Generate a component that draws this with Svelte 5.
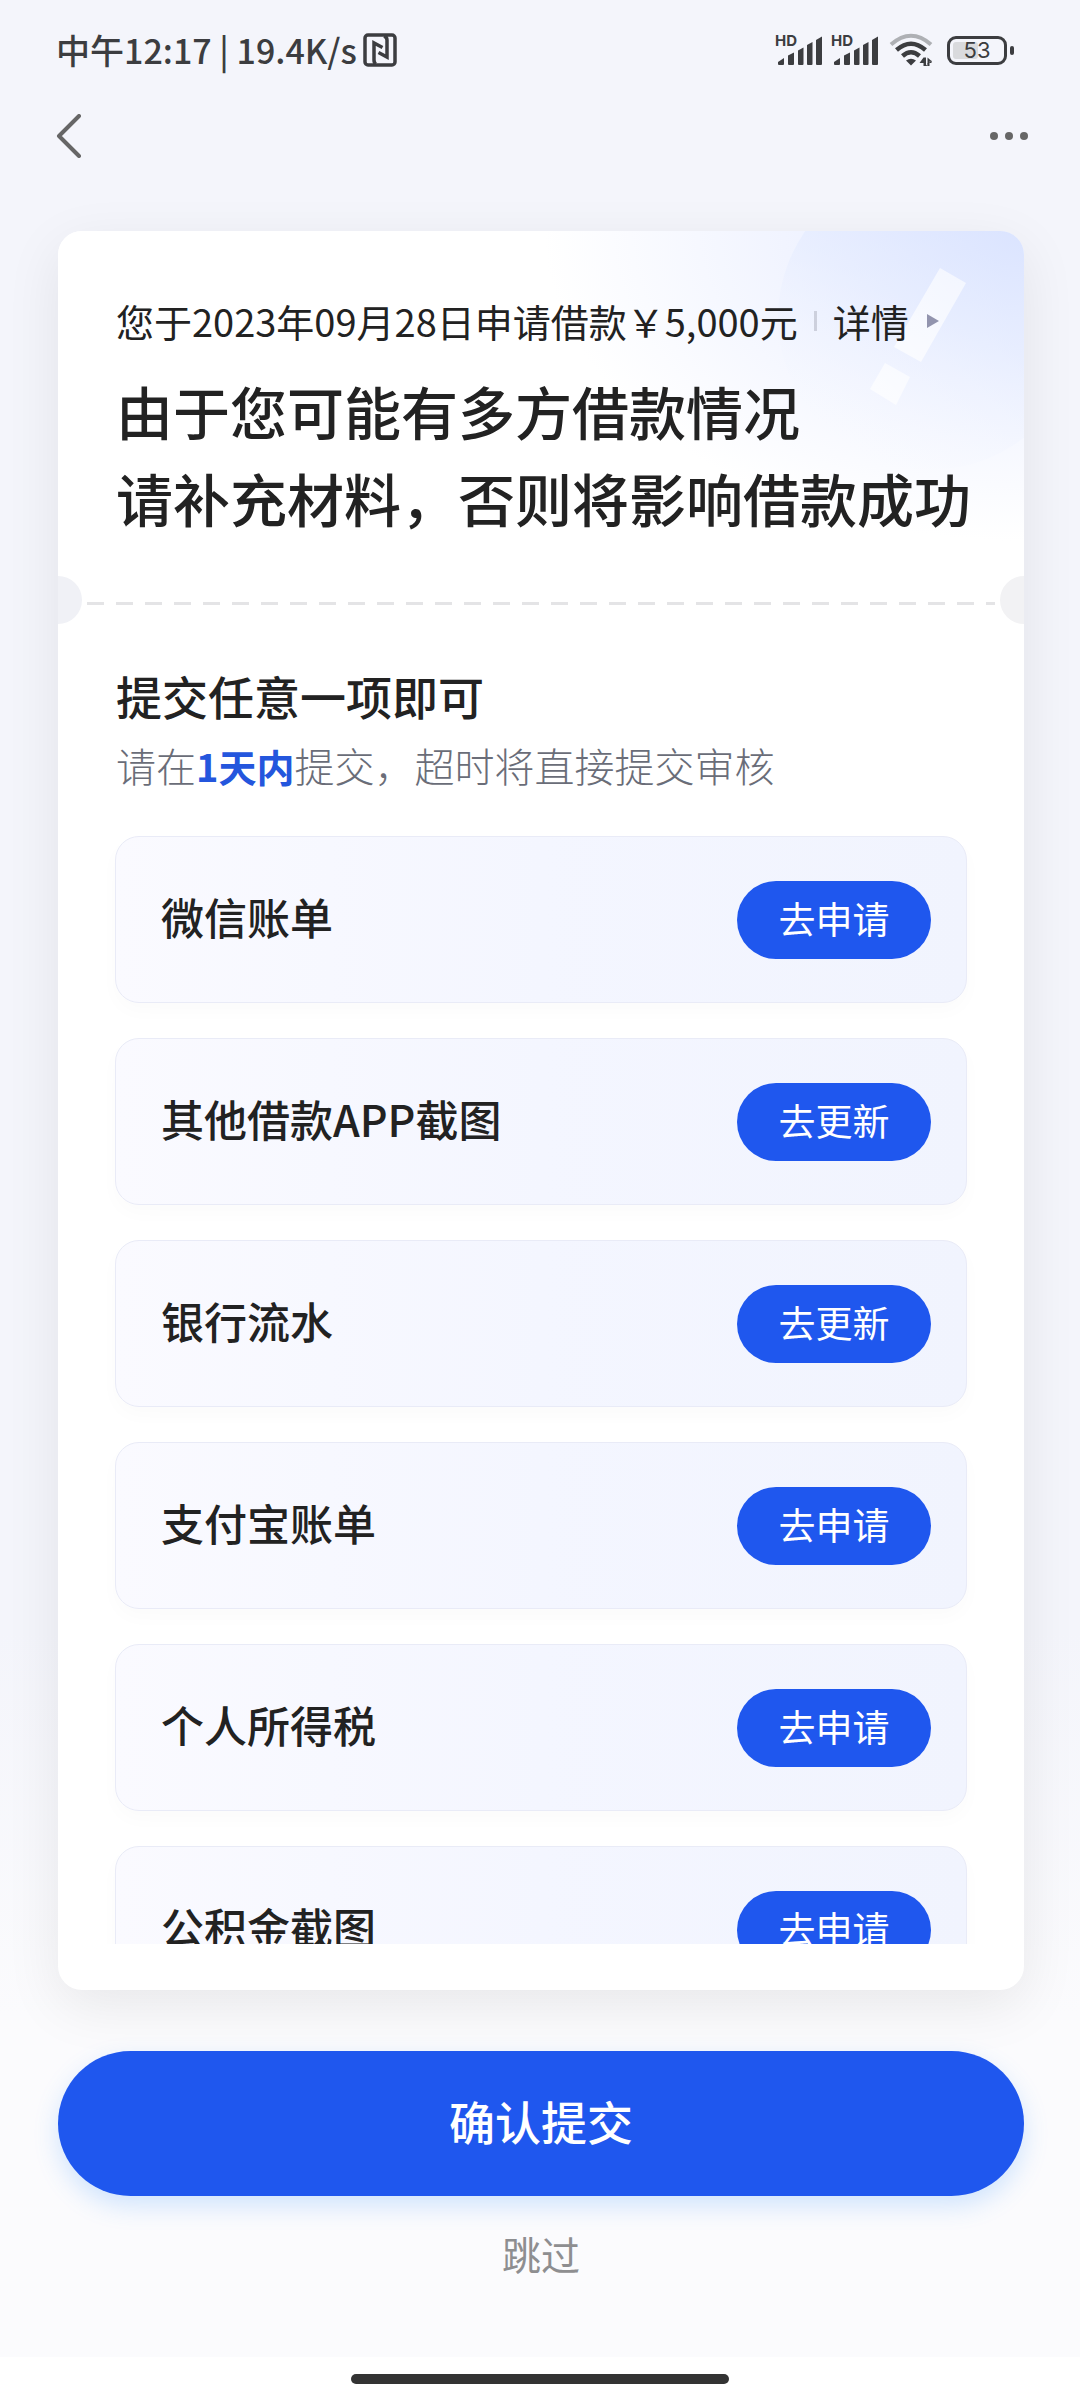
<script lang="ts">
  type Material = { id: number; name: string; action: string };

  const materials: Material[] = [
    { id: 1, name: '微信账单', action: '去申请' },
    { id: 2, name: '其他借款APP截图', action: '去更新' },
    { id: 3, name: '银行流水', action: '去更新' },
    { id: 4, name: '支付宝账单', action: '去申请' },
    { id: 5, name: '个人所得税', action: '去申请' },
    { id: 6, name: '公积金截图', action: '去申请' }
  ];

  const signals = [1, 2];
  const battery = 53;
</script>

<div class="page">
  <!-- status bar -->
  <div class="status-bar">
    <div class="status-left">
      <span>中午12:17 | 19.4K/s</span>
      <svg class="nfc" viewBox="0 0 34 34" width="34" height="34" fill="none" stroke="currentColor">
        <rect x="2" y="2" width="30" height="30" rx="3" stroke-width="3.5" />
        <path d="M13 31q-2-1-2-4V10l8.500 4.500" stroke-width="3.500" />
        <path d="M21 3q3 1 3 4v17l-8.500-4.500" stroke-width="3.500" />
      </svg>
    </div>
    <div class="status-right">
      {#each signals as sim (sim)}
        <div class="signal">
          <span class="hd">HD</span>
          <svg viewBox="0 0 48 32" width="48" height="32" fill="currentColor">
            <path d="M3 30v-2L9 24V30q0 1-1 1H4q-1 0-1-1z" />
            <path d="M13 30V21.500l6-3v11.500q0 1-1 1h-4q-1 0-1-1z" />
            <path d="M23 30V16.500l5.500-3V30q0 1-1 1H24q-1 0-1-1z" />
            <path d="M32 30V11l5.500-3V30q0 1-1 1H33q-1 0-1-1z" />
            <path d="M41 30V6l6-3.500V30q0 1-1 1h-4q-1 0-1-1z" />
          </svg>
        </div>
      {/each}
      <svg class="wifi" viewBox="0 0 44 34" width="44" height="34" fill="none" stroke="currentColor">
        <path d="M2 11.500Q22-6 42 11.500" stroke="#aeb0b4" stroke-width="4" />
        <path d="M7.500 17Q22 4.500 36.500 17" stroke-width="4.500" />
        <path d="M13.500 23Q22 15.500 30.500 23" stroke-width="4.500" />
        <path d="M17 27.500q5-3.500 10 0l-5 5z" fill="currentColor" stroke="none" />
        <path d="M34.500 24.500h2.500V33h-2.500v-3h-4zM42.500 27.500V30h-4v3H36.500" fill="currentColor" stroke="none" />
        <path d="M38.500 24.500l4.500 4h-2.500V33h-2z" fill="currentColor" stroke="none" />
      </svg>
      <div class="battery">
        <div class="battery-body">
          <div class="battery-fill" style="width: {battery}%"></div>
          <span>{battery}</span>
        </div>
        <div class="battery-tip"></div>
      </div>
    </div>
  </div>

  <nav class="nav-bar">
    <button type="button" class="icon-button" aria-label="返回">
      <svg viewBox="0 0 26 44" width="26" height="44" fill="none" stroke="#666" stroke-width="4" stroke-linecap="round" stroke-linejoin="round">
        <path d="M23 2 3 22l20 20" />
      </svg>
    </button>
    <button type="button" class="icon-button" aria-label="更多">
      <svg viewBox="0 0 38 44" width="38" height="44" fill="#666">
        <circle cx="4" cy="22" r="4" />
        <circle cx="19" cy="22" r="4" />
        <circle cx="34" cy="22" r="4" />
      </svg>
    </button>
  </nav>

  <main class="card">
    <header class="card-head">
      <svg class="decor" viewBox="0 0 260 260" width="260" height="260" aria-hidden="true">
        <defs>
          <linearGradient id="disc" x1="0.8" y1="0" x2="0.3" y2="1">
            <stop offset="0" stop-color="#d3deff" stop-opacity="0.8" />
            <stop offset="0.5" stop-color="#e2eaff" stop-opacity="0.5" />
            <stop offset="1" stop-color="#fafbff" stop-opacity="0.1" />
          </linearGradient>
          <linearGradient id="mark" x1="1" y1="0" x2="0" y2="1">
            <stop offset="0" stop-color="#fff" stop-opacity="0.6" />
            <stop offset="1" stop-color="#fff" stop-opacity="0.7" />
          </linearGradient>
        </defs>
        <circle cx="166" cy="87" r="152" fill="url(#disc)" />
        <path d="M176 37l26 15-45 79-27-15z" fill="url(#mark)" />
        <path d="M121 132l25 14-14 28-26-16z" fill="url(#mark)" />
      </svg>
      <div class="summary">
        <span>您于2023年09月28日申请借款￥5,000元</span>
        <span class="bar"></span>
        <a href="#detail">
          详情
          <svg viewBox="0 0 12 14" width="12" height="14" fill="#9294ae">
            <path d="M0 0l12 7-12 7z" />
          </svg>
        </a>
      </div>
      <h1>由于您可能有多方借款情况<br />请补充材料，否则将影响借款成功</h1>
    </header>

    <div class="tear">
      <i class="notch left"></i>
      <i class="dashes"></i>
      <i class="notch right"></i>
    </div>

    <section class="submit-area">
      <h2>提交任意一项即可</h2>
      <p class="deadline">请在<strong>1天内</strong>提交，超时将直接提交审核</p>
      <ul class="materials">
        {#each materials as item (item.id)}
          <li>
            <span>{item.name}</span>
            <button type="button">{item.action}</button>
          </li>
        {/each}
      </ul>
    </section>
  </main>

  <div class="actions">
    <button type="button" class="confirm">确认提交</button>
    <button type="button" class="skip">跳过</button>
  </div>

  <div class="home-bar"><div class="pill"></div></div>
</div>

<style>
  :global(*, *::before, *::after) {
    box-sizing: border-box;
    margin: 0;
    padding: 0;
  }

  :global(body) {
    background: #fff;
  }

  .page {
    --blue: #1f57ee;
    --ink: #222;

    height: 100vh;
    display: flex;
    flex-direction: column;
    overflow: hidden;
    background: linear-gradient(#f4f5fb 0%, #f4f5fb 68%, #fbfbfd 84%, #fbfbfd 100%);
    color: var(--ink);
    font-family: 'Noto Sans CJK SC', sans-serif;
  }

  button {
    border: none;
    background: none;
    font: inherit;
    cursor: pointer;
  }

  /* Status bar */
  .status-bar {
    flex: none;
    height: 100px;
    padding: 0 66px 0 56px;
    display: flex;
    align-items: center;
    justify-content: space-between;
    color: #3c3d40;
  }

  .status-left {
    display: flex;
    align-items: center;
    gap: 6px;
    font-size: 34px;
    font-weight: 500;
    line-height: 44px;
  }

  .status-right {
    display: flex;
    align-items: center;
    gap: 8px;
  }

  .signal {
    position: relative;
    display: flex;
  }

  .hd {
    position: absolute;
    top: 0;
    left: 0;
    font-family: Inter, sans-serif;
    font-size: 15px;
    font-weight: 700;
    line-height: 14px;
  }

  .wifi {
    margin: 0 6px 0 2px;
  }

  .battery {
    display: flex;
    align-items: center;
    gap: 3px;
  }

  .battery-body {
    position: relative;
    width: 60px;
    height: 29px;
    padding: 3px;
    border: 3px solid currentColor;
    border-radius: 9px;
  }

  .battery-fill {
    height: 100%;
    border-radius: 3px;
    background: #d9dadd;
  }

  .battery-body span {
    position: absolute;
    inset: 0;
    font-family: Inter, sans-serif;
    font-size: 22px;
    line-height: 23px;
    text-align: center;
  }

  .battery-tip {
    width: 4px;
    height: 9px;
    border-radius: 2px;
    background: currentColor;
  }

  /* Nav bar */
  .nav-bar {
    flex: none;
    height: 72px;
    padding: 0 52px 0 56px;
    display: flex;
    align-items: center;
    justify-content: space-between;
  }

  .icon-button {
    display: flex;
  }

  /* Card */
  .card {
    flex: 1;
    min-height: 0;
    margin: 59px 56px 0 58px;
    display: flex;
    flex-direction: column;
    border-radius: 24px;
    background: #fff;
    box-shadow: 0 16px 56px rgba(0, 0, 0, 0.08);
  }

  .card-head {
    position: relative;
    padding: 64px 0 32px 58px;
    overflow: hidden;
    border-radius: 24px 24px 0 0;
    background: radial-gradient(ellipse 480px 310px at 100% 0, #e1e8ff 0%, #f1f4ff 50%, #fff 100%);
    white-space: nowrap;
  }

  .decor {
    position: absolute;
    top: 0;
    right: 0;
  }

  .summary {
    position: relative;
    display: flex;
    align-items: center;
    font-size: 38px;
    line-height: 52px;
  }

  .summary .bar {
    width: 3px;
    height: 20px;
    margin: 0 16px;
    background: #cdd0dd;
  }

  .summary a {
    display: flex;
    align-items: center;
    gap: 18px;
    color: inherit;
    text-decoration: none;
  }

  h1 {
    position: relative;
    margin-top: 20px;
    padding-bottom: 3px;
    font-size: 57px;
    font-weight: 500;
    line-height: 87px;
  }

  .tear {
    flex: none;
    display: flex;
    align-items: center;
    gap: 5px;
  }

  .notch {
    width: 24px;
    height: 48px;
    background: #f0f1f6;
  }

  .notch.left {
    border-radius: 0 24px 24px 0;
  }

  .notch.right {
    border-radius: 24px 0 0 24px;
    background: #f2f2f4;
  }

  .dashes {
    flex: 1;
    height: 3px;
    margin-top: 6px;
    background: repeating-linear-gradient(90deg, #e4e4e6 0 17px, transparent 17px 29px);
  }

  .submit-area {
    flex: 1;
    min-height: 0;
    padding: 41px 0 46px;
    display: flex;
    flex-direction: column;
  }

  h2 {
    padding: 0 58px;
    font-size: 46px;
    font-weight: 500;
    line-height: 60px;
  }

  .deadline {
    margin: 12px 0 42px;
    padding: 0 58px;
    color: #6a6d78;
    font-size: 40px;
    font-weight: 300;
    line-height: 56px;
  }

  .deadline strong {
    color: #2456dd;
    font-size: 38px;
    font-weight: 700;
  }

  .materials {
    flex: 1;
    min-height: 0;
    padding: 0 57px;
    display: flex;
    flex-direction: column;
    gap: 35px;
    overflow-y: auto;
    scrollbar-width: none;
    list-style: none;
  }

  .materials li {
    flex: none;
    height: 167px;
    padding: 0 35px 0 45px;
    display: flex;
    align-items: center;
    justify-content: space-between;
    border: 1px solid #e9ebf7;
    border-radius: 24px;
    background: linear-gradient(90deg, #fafaff, #f4f6ff 50%, #f1f4fe);
    box-shadow: 0 8px 20px rgba(0, 0, 0, 0.02);
    font-size: 43px;
    font-weight: 500;
  }

  .materials span {
    padding-bottom: 8px;
  }

  .materials button {
    width: 194px;
    height: 78px;
    padding-bottom: 4px;
    border-radius: 39px;
    background: var(--blue);
    color: #fff;
    font-size: 37px;
    font-weight: 400;
    line-height: 74px;
  }

  /* Bottom actions */
  .actions {
    flex: none;
    padding: 61px 56px 74px 58px;
    display: flex;
    flex-direction: column;
    align-items: center;
    gap: 27px;
  }

  .confirm {
    width: 100%;
    height: 145px;
    padding-bottom: 8px;
    border-radius: 73px;
    background: var(--blue);
    box-shadow: 0 10px 24px rgba(60, 150, 255, 0.22);
    color: #fff;
    font-size: 46px;
    font-weight: 500;
  }

  .skip {
    color: #8e8e90;
    font-size: 39px;
    line-height: 60px;
  }

  .home-bar {
    flex: none;
    height: 43px;
    display: flex;
    align-items: center;
    justify-content: center;
    background: #fff;
  }

  .pill {
    width: 35%;
    height: 10px;
    border-radius: 5px;
    background: #333;
  }
</style>
